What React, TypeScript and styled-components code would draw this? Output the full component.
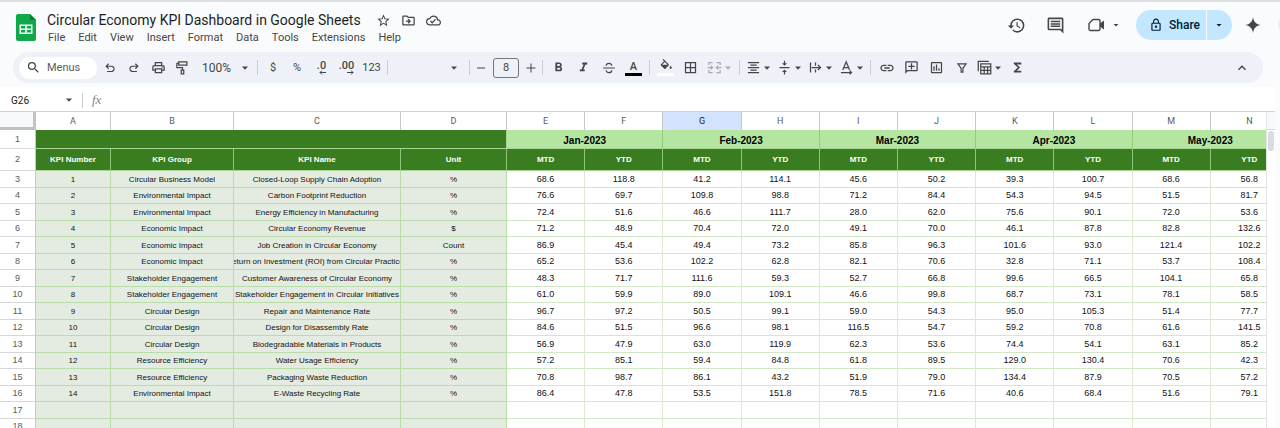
import React from "react";
import styled, { createGlobalStyle, css } from "styled-components";
import {
  MdStarBorder, MdOutlineDriveFileMove, MdOutlineCloudDone, MdHistory, MdOutlineInsertComment,
  MdLockOutline, MdSearch, MdOutlinePrint, MdFormatBold, MdFormatItalic, MdFormatAlignCenter,
  MdVerticalAlignCenter, MdInsertLink, MdOutlineAddComment, MdOutlineInsertChart, MdBorderAll,
  MdFunctions, MdKeyboardArrowUp,
} from "react-icons/md";

const ui = `Roboto, "Liberation Sans", sans-serif`;
const cellFont = `"Liberation Sans", Arial, sans-serif`;

const GlobalStyle = createGlobalStyle`
  * { box-sizing: border-box; }
  body { margin: 0; background: #f9fbfd; font-family: ${ui}; color: #444746; }
  button { font: inherit; color: inherit; background: none; border: 0; padding: 0; margin: 0; cursor: pointer; }
  svg { display: block; flex: none; }
`;

const Page = styled.div`
  height: 100vh;
  display: flex;
  flex-direction: column;
  overflow: hidden;
  border-top: 2px solid #dcdee1;
`;

const Header = styled.header`
  display: flex;
  align-items: flex-start;
  height: 50px;
  padding: 8px 0 0 16px;
  overflow: hidden;
`;

const LogoLink = styled.a`
  padding-top: 4px;
  width: 31px;
`;

const TitleBlock = styled.div`
  flex: 1;
  min-width: 0;
`;

const TitleRow = styled.div`
  display: flex;
  align-items: center;
  gap: 10px;
  height: 20px;
`;

const Title = styled.h1`
  margin: 0 5px 0 0;
  font-size: 14px;
  line-height: 20px;
  font-weight: 400;
  color: #1f1f1f;
  white-space: nowrap;
`;

const IconButton = styled.button<{ $w?: number }>`
  display: flex;
  align-items: center;
  justify-content: center;
  flex: none;
  width: ${(p) => p.$w ?? 15}px;
`;

const MenuBar = styled.nav`
  display: flex;
  gap: 13px;
  padding-left: 1px;
  font-size: 11px;
  line-height: 16px;
`;

const Actions = styled.div`
  display: flex;
  align-items: center;
  height: 30px;
  color: #444746;
`;

const MeetButton = styled.button`
  display: flex;
  align-items: center;
  gap: 7px;
  margin: 0 16px 0 13px;
`;

const ShareGroup = styled.div`
  display: flex;
  gap: 1px;
  height: 30px;
  color: #001d35;
`;

const ShareButton = styled.button`
  display: flex;
  align-items: center;
  gap: 6px;
  width: 70px;
  padding-left: 13px;
  border-radius: 15px 0 0 15px;
  background: #c2e7ff;
  font-size: 12px;
  font-weight: 500;
`;

const ShareMore = styled.button`
  display: flex;
  align-items: center;
  justify-content: center;
  width: 25px;
  padding-right: 1px;
  border-radius: 0 15px 15px 0;
  background: #c2e7ff;
`;

const Avatar = styled.button`
  width: 26px;
  height: 26px;
  margin: 0 -24px 0 4px;
  border-radius: 50%;
  background: #eceff6;
`;

const Toolbar = styled.div`
  display: flex;
  align-items: center;
  flex: none;
  height: 31px;
  margin: 0 17px 4px 13px;
  padding: 0 9px 0 6px;
  border-radius: 16px;
  background: #eef2f8;
`;

const SearchPill = styled.label`
  display: flex;
  align-items: center;
  flex: none;
  gap: 6px;
  width: 78px;
  height: 22px;
  margin-right: 1px;
  padding-left: 7px;
  border-radius: 11px;
  background: #fff;
`;

const SearchInput = styled.input`
  width: 44px;
  padding: 0;
  border: 0;
  outline: 0;
  background: none;
  font: 11px ${ui};
  color: #444746;
  &::placeholder { color: #5a5d5c; opacity: 1; }
`;

const Tool = styled.button<{ $w?: number; $muted?: boolean }>`
  display: flex;
  align-items: center;
  justify-content: center;
  flex: none;
  gap: 2px;
  width: ${(p) => p.$w ?? 25}px;
  height: 24px;
  font-size: 11px;
  color: ${(p) => (p.$muted ? "#a9acaf" : "#444746")};
`;

const ZoomButton = styled(Tool)`
  gap: 10px;
  padding-left: 3px;
  font-size: 12px;
`;

const FontButton = styled(Tool)`
  justify-content: flex-end;
  padding-right: 8px;
`;

const Decimal = styled.span`
  display: flex;
  flex-direction: column;
  align-items: flex-end;
  font-size: 11px;
  font-weight: 500;
  line-height: 9px;
`;

const Divider = styled.span<{ $gap?: number }>`
  flex: none;
  width: 1px;
  height: 15px;
  margin: 0 ${(p) => p.$gap ?? 3}px;
  background: #c9ccd0;
`;

const SizeInput = styled.input`
  width: 26px;
  height: 20px;
  margin: 0 4px;
  padding: 0;
  border: 1px solid #747775;
  border-radius: 3px;
  background: none;
  text-align: center;
  font: 11px ${ui};
  color: #444746;
`;

const Swatched = styled.span<{ $color: string }>`
  display: flex;
  justify-content: center;
  width: 17px;
  border-bottom: 3px solid ${(p) => p.$color};
  font-size: 11px;
  font-weight: 500;
  line-height: 13px;
`;

const AddCommentIcon = styled(MdOutlineAddComment)`
  transform: scaleX(-1);
`;

const Collapse = styled(Tool)`
  margin-left: auto;
`;

const Workspace = styled.div`
  flex: 1;
  display: flex;
  flex-direction: column;
  min-height: 0;
  margin-right: 5px;
  background: #fff;
`;

const FormulaBar = styled.div`
  display: flex;
  align-items: center;
  flex: none;
  height: 25px;
  padding: 2px 0 0 11px;
  border-bottom: 1px solid #d0d3d6;
`;

const NameBox = styled.input`
  width: 54px;
  padding: 0;
  border: 0;
  background: none;
  font: 10px ${ui};
  color: #202124;
`;

const Fx = styled.span`
  font: italic 13px "Liberation Serif", serif;
  color: #80868b;
`;

const FormulaInput = styled.input`
  flex: 1;
  min-width: 0;
  border: 0;
  background: none;
`;

const SheetArea = styled.div`
  flex: 1;
  display: flex;
  min-height: 0;
`;

const GridClip = styled.div`
  flex: 1;
  min-width: 0;
  overflow: hidden;
`;

const ScrollTrack = styled.div`
  width: 9px;
  border-left: 1px solid #e3e5e8;
`;

const ScrollCap = styled.div`
  height: 18px;
  border-bottom: 1px solid #d0d3d6;
  background: #f8f9fa;
`;

const Thumb = styled.div`
  width: 6px;
  height: 20px;
  margin: 1px;
  border-radius: 3px;
  background: #dadce0;
`;

const Grid = styled.table`
  width: calc(100% + 23px);
  min-width: 1289px;
  table-layout: fixed;
  border-collapse: separate;
  border-spacing: 0;
  font: 8px/15px ${cellFont};
  color: #111;
  text-align: center;
  th, td { padding: 0; font-weight: 400; }
`;

const Col = styled.col<{ $w?: number }>`
  ${(p) => p.$w && css`width: ${p.$w}px;`}
`;

const Corner = styled.td`
  height: 18px;
  border-right: 3px solid #c0c2c4;
  border-bottom: 3px solid #c0c2c4;
  background: #f8f9fa;
`;

const ColumnHead = styled.th<{ $active?: boolean }>`
  height: 18px;
  border-right: 1px solid #c6c8ca;
  font-family: ${ui};
  font-size: 9px;
  color: ${(p) => (p.$active ? "#041e49" : "#575b5f")};
  background: ${(p) => (p.$active ? "#d3e3fd" : "#fff")};
`;

const RowHead = styled.th`
  border-right: 1px solid #c6c8ca;
  border-bottom: 1px solid #d5d7d9;
  background: #fff;
  color: #575b5f;
  font-size: 9px;
`;

const Banner = styled.td`
  height: 19px;
  border-bottom: 1px solid #a8d494;
  border-right: 1px solid #a8d494;
  background: #3a7d20;
`;

const Month = styled.th`
  border-bottom: 1px solid #a8d494;
  border-right: 1px solid #93cf78;
  background: #b5e6a1;
  && {
    padding-top: 3px;
    font: bold 10px/15px ${cellFont};
  }
  color: #000;
`;

const Label = styled.th`
  height: 22px;
  border-right: 1px solid #8fc47a;
  border-bottom: 1px solid #a8d494;
  background: #3a7d20;
  color: #fff;
  && { font-weight: 700; }
`;

const Row = styled.tr`
  height: 16px;
  &:nth-child(odd) { height: 17px; }
`;

const InfoCell = styled.td`
  border-right: 1px solid #b9dcab;
  border-bottom: 1px solid #b9dcab;
  background: #e4ece1;
`;

const ValueCell = styled.td`
  border-right: 1px solid #dde9d4;
  border-bottom: 1px solid #d3e8c6;
  background: #fff;
  font-size: 9px;
`;

const Clip = styled.div`
  display: flex;
  justify-content: center;
  overflow: hidden;
  white-space: nowrap;
`;

const Caret = ({ small }: { small?: boolean }) => (
  <svg width="8" height="8" viewBox="0 0 8 8" fill="currentColor" aria-hidden="true">
    <path d={small ? "M1.5 3h5L4 5.6z" : "M1 2.6h6L4 5.8z"} />
  </svg>
);

const Glyph = ({ children, size = 14 }: { children: React.ReactNode; size?: number }) => (
  <svg width={size} height={size} viewBox="0 0 24 24" fill="none" stroke="currentColor" strokeWidth="2" aria-hidden="true">
    {children}
  </svg>
);

const undoPath =
  "M7 19v-2h7.1q1.575 0 2.738-1T18 13.5 16.838 11 14.1 10H7.8l2.6 2.6L9 14 4 9l5-5 1.4 1.4L7.8 8h6.3q2.425 0 4.163 1.575T20 13.5t-1.737 3.925T14.1 19z";
const bucketPath =
  "M16.56 8.94L7.62 0 6.21 1.41l2.38 2.38-5.15 5.15a1.49 1.49 0 0 0 0 2.12l5.5 5.5c.29.29.68.44 1.060.44s.77-.15 1.060-.44l5.5-5.5c.59-.58.59-1.530 0-2.120zM5.210 10L10 5.210 14.790 10H5.210zM20 11.500s-2 2.170-2 3.500c0 1.100.9 2 2 2s2-.9 2-2c0-1.330-2-3.500-2-3.500z";

const SheetsLogo = () => (
  <svg width="20" height="27" viewBox="0 0 20 27" aria-hidden="true">
    <path d="M2 0h12l6 6v19a2 2 0 0 1-2 2H2a2 2 0 0 1-2-2V2a2 2 0 0 1 2-2z" fill="#0fa94b" />
    <path d="M14 0l6 6h-6z" fill="#0a8137" />
    <path d="M3.5 10.5h13v9.500h-13zM5 12v2.500h4.200V12zm5.800 0v2.500H15V12zM5 16v2.500h4.200V16zm5.800 0v2.500H15V16z" fill="#f1fbf4" fillRule="evenodd" />
  </svg>
);

const menus = ["File", "Edit", "View", "Insert", "Format", "Data", "Tools", "Extensions", "Help"];
const letters = "ABCDEFGHIJKLMN".split("");
const months = ["Jan-2023", "Feb-2023", "Mar-2023", "Apr-2023", "May-2023"];

const data: string[][] = [
  ["Circular Business Model", "Closed-Loop Supply Chain Adoption", "%", "68.6 118.8 41.2 114.1 45.6 50.2 39.3 100.7 68.6 56.8"],
  ["Environmental Impact", "Carbon Footprint Reduction", "%", "76.6 69.7 109.8 98.8 71.2 84.4 54.3 94.5 51.5 81.7"],
  ["Environmental Impact", "Energy Efficiency in Manufacturing", "%", "72.4 51.6 46.6 111.7 28.0 62.0 75.6 90.1 72.0 53.6"],
  ["Economic Impact", "Circular Economy Revenue", "$", "71.2 48.9 70.4 72.0 49.1 70.0 46.1 87.8 82.8 132.6"],
  ["Economic Impact", "Job Creation in Circular Economy", "Count", "86.9 45.4 49.4 73.2 85.8 96.3 101.6 93.0 121.4 102.2"],
  ["Economic Impact", "Return on Investment (ROI) from Circular Practices", "%", "65.2 53.6 102.2 62.8 82.1 70.6 32.8 71.1 53.7 108.4"],
  ["Stakeholder Engagement", "Customer Awareness of Circular Economy", "%", "48.3 71.7 111.6 59.3 52.7 66.8 99.6 66.5 104.1 65.8"],
  ["Stakeholder Engagement", "Stakeholder Engagement in Circular Initiatives", "%", "61.0 59.9 89.0 109.1 46.6 99.8 68.7 73.1 78.1 58.5"],
  ["Circular Design", "Repair and Maintenance Rate", "%", "96.7 97.2 50.5 99.1 59.0 54.3 95.0 105.3 51.4 77.7"],
  ["Circular Design", "Design for Disassembly Rate", "%", "84.6 51.5 96.6 98.1 116.5 54.7 59.2 70.8 61.6 141.5"],
  ["Circular Design", "Biodegradable Materials in Products", "%", "56.9 47.9 63.0 119.9 62.3 53.6 74.4 54.1 63.1 85.2"],
  ["Resource Efficiency", "Water Usage Efficiency", "%", "57.2 85.1 59.4 84.8 61.8 89.5 129.0 130.4 70.6 42.3"],
  ["Resource Efficiency", "Packaging Waste Reduction", "%", "70.8 98.7 86.1 43.2 51.9 79.0 134.4 87.9 70.5 57.2"],
  ["Environmental Impact", "E-Waste Recycling Rate", "%", "86.4 47.8 53.5 151.8 78.5 71.6 40.6 68.4 51.6 79.1"],
];
const blankRows = [17, 18];

export default function App() {
  return (
    <Page>
      <GlobalStyle />
      <Header>
        <LogoLink href="#" aria-label="Sheets home"><SheetsLogo /></LogoLink>
        <TitleBlock>
          <TitleRow>
            <Title>Circular Economy KPI Dashboard in Google Sheets</Title>
            <IconButton aria-label="Star"><MdStarBorder size={15} /></IconButton>
            <IconButton aria-label="Move"><MdOutlineDriveFileMove size={15} /></IconButton>
            <IconButton aria-label="Document status"><MdOutlineCloudDone size={15} /></IconButton>
          </TitleRow>
          <MenuBar>
            {menus.map((m) => <button key={m}>{m}</button>)}
          </MenuBar>
        </TitleBlock>
        <Actions>
          <IconButton $w={38} aria-label="Version history"><MdHistory size={19} /></IconButton>
          <IconButton $w={40} aria-label="Comments"><MdOutlineInsertComment size={19} /></IconButton>
          <MeetButton aria-label="Join a call">
            <svg width="17" height="14" viewBox="0 0 17 14" aria-hidden="true">
              <path d="M5 1.500h5.500a1.500 1.500 0 0 1 1.500 1.500v8a1.500 1.500 0 0 1-1.500 1.500H2.500A1.500 1.500 0 0 1 1 11V5.500z" fill="none" stroke="currentColor" strokeWidth="1.400" strokeLinejoin="round" />
              <path d="M12 5.500L16 2.500v9L12 8.500z" fill="currentColor" />
            </svg>
            <Caret small />
          </MeetButton>
          <ShareGroup>
            <ShareButton><MdLockOutline size={14} />Share</ShareButton>
            <ShareMore aria-label="Share options"><Caret small /></ShareMore>
          </ShareGroup>
          <IconButton $w={42} aria-label="Ask Gemini">
            <svg width="16" height="16" viewBox="0 0 16 16" fill="currentColor" aria-hidden="true">
              <path d="M8 0C8.600 4.800 11.200 7.400 16 8 11.200 8.600 8.600 11.200 8 16 7.400 11.200 4.800 8.600 0 8 4.800 7.400 7.400 4.800 8 0z" />
            </svg>
          </IconButton>
          <Avatar aria-label="Account" />
        </Actions>
      </Header>

      <Toolbar role="toolbar">
        <SearchPill>
          <MdSearch size={15} />
          <SearchInput placeholder="Menus" aria-label="Search the menus" />
        </SearchPill>
        <Tool $w={24} aria-label="Undo"><Glyph><path d={undoPath} fill="currentColor" stroke="none" /></Glyph></Tool>
        <Tool $w={24} aria-label="Redo"><Glyph><path d={undoPath} transform="matrix(-1 0 0 1 24 0)" fill="currentColor" stroke="none" /></Glyph></Tool>
        <Tool $w={24} aria-label="Print"><MdOutlinePrint size={15} /></Tool>
        <Tool $w={24} aria-label="Paint format">
          <Glyph size={15}><path d="M6 3h13v5H6zM6 5.500H3V12h9v4M10 16h4v6h-4z" /></Glyph>
        </Tool>
        <ZoomButton $w={60}>100%<Caret /></ZoomButton>
        <Divider />
        <Tool $w={24}>$</Tool>
        <Tool $w={24}>%</Tool>
        <Tool aria-label="Decrease decimal places">
          <Decimal>.0
            <svg width="7" height="5" viewBox="0 0 7 5" fill="none" stroke="currentColor" aria-hidden="true"><path d="M7 2.500H1M3 .500l-2 2 2 2" /></svg>
          </Decimal>
        </Tool>
        <Tool aria-label="Increase decimal places">
          <Decimal>.00
            <svg width="7" height="5" viewBox="0 0 7 5" fill="none" stroke="currentColor" aria-hidden="true"><path d="M0 2.500h6M4 .500l2 2-2 2" /></svg>
          </Decimal>
        </Tool>
        <Tool>123</Tool>
        <Divider />
        <FontButton $w={75} aria-label="Font"><Caret /></FontButton>
        <Divider />
        <Tool $w={16} aria-label="Decrease font size"><Glyph size={12}><path d="M4 12h16" /></Glyph></Tool>
        <SizeInput defaultValue="8" aria-label="Font size" />
        <Tool $w={16} aria-label="Increase font size"><Glyph size={12}><path d="M3 12h18M12 3v18" /></Glyph></Tool>
        <Divider />
        <Tool aria-label="Bold"><MdFormatBold size={15} /></Tool>
        <Tool aria-label="Italic"><MdFormatItalic size={15} /></Tool>
        <Tool aria-label="Strikethrough">
          <Glyph><path d="M2 12h20M17 8q-1-4-5-4-4.500 0-5 4M7 16q1 4 5 4 4.500 0 5-4" /></Glyph>
        </Tool>
        <Tool aria-label="Text colour"><Swatched $color="#000">A</Swatched></Tool>
        <Divider />
        <Tool aria-label="Fill colour"><Swatched $color="#fff"><Glyph><path d={bucketPath} fill="currentColor" stroke="none" /></Glyph></Swatched></Tool>
        <Tool aria-label="Borders"><MdBorderAll size={15} /></Tool>
        <Tool $w={33} $muted aria-label="Merge cells">
          <Glyph size={15}><path d="M9 4H3v4M15 4h6v4M9 20H3v-4M15 20h6v-4M1 12h8M6 9l3 3-3 3M23 12h-8M18 9l-3 3 3 3" /></Glyph>
          <Caret />
        </Tool>
        <Divider />
        <Tool $w={31} aria-label="Horizontal align"><MdFormatAlignCenter size={15} /><Caret /></Tool>
        <Tool $w={31} aria-label="Vertical align"><MdVerticalAlignCenter size={15} /><Caret /></Tool>
        <Tool $w={31} aria-label="Text wrapping">
          <Glyph size={15}><path d="M4 4v16M12 4v5M12 15v5M6 12h14M16 8l4 4-4 4" /></Glyph><Caret />
        </Tool>
        <Tool $w={31} aria-label="Text rotation">
          <Glyph size={15}><path d="M6 16L11.500 3 17 16M8 12h7M3 20h17M17 17l3 3-3 3" /></Glyph><Caret />
        </Tool>
        <Divider />
        <Tool aria-label="Insert link"><MdInsertLink size={16} /></Tool>
        <Tool aria-label="Insert comment"><AddCommentIcon size={15} /></Tool>
        <Tool aria-label="Insert chart"><MdOutlineInsertChart size={15} /></Tool>
        <Tool aria-label="Create a filter"><Glyph><path d="M5 5h14l-5.500 7.500V19h-3v-6.500z" /></Glyph></Tool>
        <Tool $w={31} aria-label="Table views">
          <Glyph size={15}><path d="M2 18V2h17M6 6h16v16H6zM6 11h16M6 16.500h16M11.500 11v11M17 11v11" /></Glyph><Caret />
        </Tool>
        <Tool $w={24} aria-label="Functions"><MdFunctions size={15} /></Tool>
        <Collapse $w={24} aria-label="Hide the menus"><MdKeyboardArrowUp size={16} /></Collapse>
      </Toolbar>

      <Workspace>
        <FormulaBar>
          <NameBox defaultValue="G26" aria-label="Name box" />
          <Caret />
          <Divider $gap={9} />
          <Fx>fx</Fx>
          <FormulaInput aria-label="Formula" />
        </FormulaBar>
        <SheetArea>
          <GridClip>
            <Grid>
              <colgroup>
                <Col $w={36} /><Col $w={75} /><Col $w={123} /><Col $w={167} /><Col $w={106} />
                {letters.slice(4).map((l) => <Col key={l} />)}
              </colgroup>
              <thead>
                <tr>
                  <Corner />
                  {letters.map((l) => <ColumnHead key={l} $active={l === "G"}>{l}</ColumnHead>)}
                </tr>
                <tr>
                  <RowHead>1</RowHead>
                  <Banner colSpan={4} />
                  {months.map((m) => <Month key={m} colSpan={2}>{m}</Month>)}
                </tr>
                <tr>
                  <RowHead>2</RowHead>
                  {["KPI Number", "KPI Group", "KPI Name", "Unit"].map((t) => <Label key={t}>{t}</Label>)}
                  {months.map((m) => (
                    <React.Fragment key={m}><Label>MTD</Label><Label>YTD</Label></React.Fragment>
                  ))}
                </tr>
              </thead>
              <tbody>
                {data.map(([group, name, unit, values], i) => (
                  <Row key={name}>
                    <RowHead>{i + 3}</RowHead>
                    {[String(i + 1), group, name, unit].map((t, j) => (
                      <InfoCell key={j}><Clip>{t}</Clip></InfoCell>
                    ))}
                    {values.split(" ").map((v, j) => <ValueCell key={j}>{v}</ValueCell>)}
                  </Row>
                ))}
                {blankRows.map((n) => (
                  <Row key={n}>
                    <RowHead>{n}</RowHead>
                    {letters.map((l, j) => (j < 4 ? <InfoCell key={l} /> : <ValueCell key={l} />))}
                  </Row>
                ))}
              </tbody>
            </Grid>
          </GridClip>
          <ScrollTrack><ScrollCap /><Thumb /></ScrollTrack>
        </SheetArea>
      </Workspace>
    </Page>
  );
}
